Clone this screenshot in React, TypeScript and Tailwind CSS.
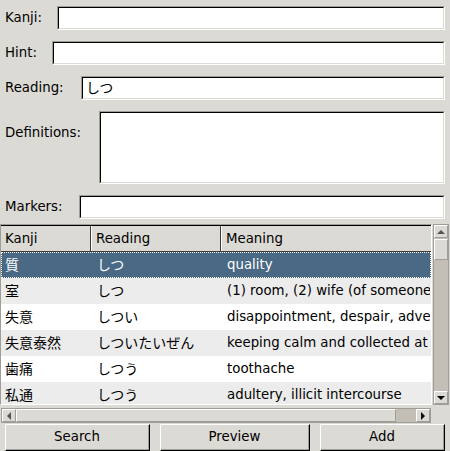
const font = { fontFamily: '"DejaVu Sans", "Noto Sans CJK JP", sans-serif' };

function Entry({ className = "", children }: { className?: string; children?: React.ReactNode }) {
  return (
    <div className={`border-t border-l border-[#9f9d98] border-b border-r border-b-white border-r-white ${className}`}>
      <div className="h-full border-t border-l border-black border-b border-r border-b-[#dcdad5] border-r-[#dcdad5] bg-white px-[3px] flex items-center">
        {children}
      </div>
    </div>
  );
}

function FormRow({ label, labelW, children, tall }: { label: string; labelW: string; children?: React.ReactNode; tall?: boolean }) {
  return (
    <div className={`flex ${tall ? "items-start" : "items-center"} pr-[5px]`}>
      <div className={`${labelW} pl-[5px] shrink-0 ${tall ? "pt-[12px]" : ""}`}>{label}</div>
      <Entry className={`flex-1 ${tall ? "h-[73px]" : "h-[24px]"}`}>{children}</Entry>
    </div>
  );
}

const rows = [
  ["質", "しつ", "quality"],
  ["室", "しつ", "(1) room, (2) wife (of someone of high rank)"],
  ["失意", "しつい", "disappointment, despair, adversity"],
  ["失意泰然", "しついたいぜん", "keeping calm and collected at times of disappointment"],
  ["歯痛", "しつう", "toothache"],
  ["私通", "しつう", "adultery, illicit intercourse"],
];

function ArrowBtn({ dir }: { dir: "up" | "down" | "left" | "right" }) {
  const tri =
    dir === "up"
      ? "border-l-[4px] border-r-[4px] border-b-[4px] border-l-transparent border-r-transparent border-b-[#555]"
      : dir === "down"
      ? "border-l-[4px] border-r-[4px] border-t-[4px] border-l-transparent border-r-transparent border-t-black"
      : dir === "left"
      ? "border-t-[4px] border-b-[4px] border-r-[4px] border-t-transparent border-b-transparent border-r-[#555]"
      : "border-t-[4px] border-b-[4px] border-l-[4px] border-t-transparent border-b-transparent border-l-black";
  return (
    <div className="w-[14px] h-[13px] shrink-0 bg-[#dcdad5] border border-[#9f9d98] border-t-white border-l-white flex items-center justify-center">
      <div className={`w-0 h-0 ${tri}`} />
    </div>
  );
}

export default function App() {
  return (
    <div style={font} className="w-[450px] h-[451px] bg-[#dcdad5] text-[13.33px] text-black overflow-hidden flex flex-col">
      <div className="flex flex-col gap-[11px] pt-[6px]">
        <FormRow label="Kanji:" labelW="w-[57px]" />
        <FormRow label="Hint:" labelW="w-[52px]" />
        <FormRow label="Reading:" labelW="w-[81px]">
          <span className="text-[14px]">しつ</span>
        </FormRow>
        <FormRow label="Definitions:" labelW="w-[99px]" tall />
        <FormRow label="Markers:" labelW="w-[79px]" />
      </div>

      <div className="flex mt-[5px] h-[181px]">
        <div className="w-[432px] border-t border-l border-[#9f9d98] border-r border-b border-r-white border-b-white overflow-hidden bg-white">
          <div className="flex h-[27px] bg-[#dcdad5] border-t border-black border-b border-b-[#3c3b37]">
            <div className="w-[90px] pl-[4px] flex items-center border-r border-[#3c3b37]">Kanji</div>
            <div className="w-[130px] pl-[4px] flex items-center border-l border-white border-r border-r-[#3c3b37]">Reading</div>
            <div className="flex-1 pl-[4px] flex items-center border-l border-white">Meaning</div>
          </div>
          {rows.map((r, i) => {
            const sel = i === 0;
            const bg = sel ? "bg-[#4a6984] text-white border border-dotted border-white" : i % 2 === 1 ? "bg-[#ececec]" : "bg-white";
            return (
              <div key={i} className={`flex h-[26px] items-center whitespace-nowrap ${bg} ${sel ? "" : "border border-transparent"}`}>
                <div className="w-[91px] pl-[3px] overflow-hidden text-[14px]">{r[0]}</div>
                <div className="w-[130px] pl-[4px] overflow-hidden text-[14px]">{r[1]}</div>
                <div className="flex-1 pl-[4px] overflow-hidden">{r[2]}</div>
              </div>
            );
          })}
        </div>
        <div className="w-[16px] ml-[1px] flex flex-col bg-[#c3bfb7] border border-[#9f9d98]">
          <ArrowBtn dir="up" />
          <div className="h-[21px] mt-[1px] bg-[#dcdad5] border border-[#9f9d98] border-t-white border-l-white" />
          <div className="flex-1" />
          <ArrowBtn dir="down" />
        </div>
      </div>

      <div className="flex mt-[3px] h-[15px] w-[430px] ml-[1px] bg-[#c3bfb7] border border-[#9f9d98]">
        <ArrowBtn dir="left" />
        <div className="w-[380px] bg-[#dcdad5] border border-[#9f9d98] border-t-white border-l-white" />
        <div className="flex-1" />
        <ArrowBtn dir="right" />
      </div>

      <div className="flex mt-[1px] h-[28px] pl-[5px]">
        {[
          ["Search", "w-[145px]"],
          ["Preview", "w-[150px] ml-[10px]"],
          ["Add", "w-[125px] ml-[10px]"],
        ].map(([t, w]) => (
          <div key={t} className={`${w} h-full border border-white border-r-black border-b-black`}>
            <div className="h-full border-r border-b border-[#9f9d98] flex items-center justify-center">{t}</div>
          </div>
        ))}
      </div>
    </div>
  );
}
